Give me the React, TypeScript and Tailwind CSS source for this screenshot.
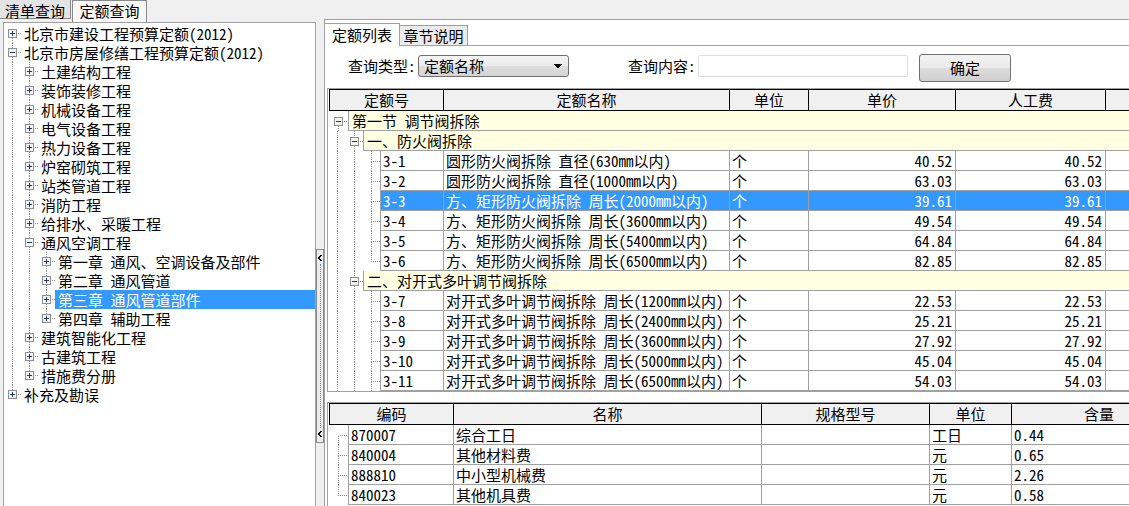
import React from "react";

const FONT = "font-['Noto_Sans_Mono_CJK_SC','Noto_Sans_CJK_SC',sans-serif]";

type GuideProps = {
  up?: boolean;
  down?: boolean;
  right?: boolean;
  box?: "plus" | "minus";
  w?: number;
  h: number;
};

function Guide({ up, down, right, box, w = 17, h }: GuideProps) {
  const n = Math.floor(w / 2);
  const m = Math.floor(h / 2);
  const cx = n + 0.5;
  const cy = m + 0.5;
  const dot = { stroke: "#8c8c8c", strokeWidth: 1, strokeDasharray: "1 1" };
  return (
    <svg width={w} height={h} className="block shrink-0" shapeRendering="crispEdges">
      {up && <line x1={cx} y1={0} x2={cx} y2={cy} {...dot} />}
      {down && <line x1={cx} y1={cy} x2={cx} y2={h} {...dot} />}
      {right && <line x1={cx + 1} y1={cy} x2={w} y2={cy} {...dot} />}
      {box && (
        <g>
          <rect x={n - 4 + 0.5} y={m - 4 + 0.5} width={8} height={8} fill="#f4f4f4" stroke="#8f8f8f" />
          <line x1={n - 2} y1={cy} x2={n + 3} y2={cy} stroke="#24386e" />
          {box === "plus" && <line x1={cx} y1={m - 2} x2={cx} y2={m + 3} stroke="#24386e" />}
        </g>
      )}
    </svg>
  );
}

type TreeItem = {
  t: string;
  g: boolean[];
  box: "plus" | "minus";
  up: boolean;
  down: boolean;
  sel?: boolean;
};

const lvl1a = ["土建结构工程", "装饰装修工程", "机械设备工程", "电气设备工程", "热力设备工程", "炉窑砌筑工程", "站类管道工程", "消防工程", "给排水、采暖工程"];

const tree: TreeItem[] = [
  { t: "北京市建设工程预算定额(2012)", g: [], box: "plus", up: false, down: true },
  { t: "北京市房屋修缮工程预算定额(2012)", g: [], box: "minus", up: true, down: true },
  ...lvl1a.map((t) => ({ t, g: [true], box: "plus" as const, up: true, down: true })),
  { t: "通风空调工程", g: [true], box: "minus", up: true, down: true },
  { t: "第一章 通风、空调设备及部件", g: [true, true], box: "plus", up: true, down: true },
  { t: "第二章 通风管道", g: [true, true], box: "plus", up: true, down: true },
  { t: "第三章 通风管道部件", g: [true, true], box: "plus", up: true, down: true, sel: true },
  { t: "第四章 辅助工程", g: [true, true], box: "plus", up: true, down: false },
  { t: "建筑智能化工程", g: [true], box: "plus", up: true, down: true },
  { t: "古建筑工程", g: [true], box: "plus", up: true, down: true },
  { t: "措施费分册", g: [true], box: "plus", up: true, down: false },
  { t: "补充及勘误", g: [], box: "plus", up: true, down: false },
];

function LeftColumn() {
  return (
    <div className="w-[316px] shrink-0 flex flex-col">
      <div className="h-[22px] flex items-start">
        <div className="w-[71px] h-[19px] bg-[#e4e4e4] border-r border-b border-[#8a8a8a] pt-[3px] leading-[16px] text-center">
          清单查询
        </div>
        <div className="ml-[1px] w-[75px] h-[22px] bg-[#f7f7f7] border-l border-r border-t border-[#8a8a8a] pt-[2px] leading-[16px] text-center">
          定额查询
        </div>
      </div>
      <div className="flex-1 ml-[3px] border-l border-t border-r border-[#a0a0a0] bg-white pt-[1px]">
        {tree.map((r, i) => (
          <div key={i} className="flex h-[19px]">
            {r.g.map((v, j) => (
              <Guide key={j} h={19} up={v} down={v} />
            ))}
            <Guide h={19} up={r.up} down={r.down} right box={r.box} />
            <div
              className={`flex-1 pl-[3px] leading-[19px] whitespace-pre ${
                r.sel ? "bg-[#3399ff] text-white" : ""
              }`}
            >
              {r.t}
            </div>
          </div>
        ))}
      </div>
    </div>
  );
}

function Chevron() {
  return (
    <svg width="6" height="8" className="block" shapeRendering="crispEdges">
      <path d="M4 1 L2 4 L4 7" stroke="#000" strokeWidth="1.6" fill="none" />
    </svg>
  );
}

function Splitter() {
  return (
    <div className="w-[8px] shrink-0 flex flex-col">
      <div className="mt-[249px] h-[194px] w-[8px] border border-[#8a8a8a] bg-[#ececec] flex flex-col items-center py-[4px]">
        <Chevron />
        <div className="flex-1 my-[2px] border-l border-dotted border-[#5a86d0]" />
        <Chevron />
      </div>
    </div>
  );
}

type GridRow =
  | { kind: "group"; gut: GuideProps[]; text: string }
  | { kind: "data"; gut: GuideProps[]; c: string[]; sel?: boolean };

const G0: GuideProps = { up: true, down: true, h: 20 };

const dataRow = (c: string[], last = false, sel = false): GridRow => ({
  kind: "data",
  gut: [G0, G0, { up: true, down: !last, right: true, h: 20 }],
  c,
  sel,
});

const upperRows: GridRow[] = [
  { kind: "group", gut: [{ box: "minus", down: true, right: true, h: 20, w: 19 }], text: "第一节 调节阀拆除" },
  { kind: "group", gut: [G0, { box: "minus", up: true, down: true, right: true, h: 20 }], text: "一、防火阀拆除" },
  dataRow(["3-1", "圆形防火阀拆除 直径(630mm以内)", "个", "40.52", "40.52"]),
  dataRow(["3-2", "圆形防火阀拆除 直径(1000mm以内)", "个", "63.03", "63.03"]),
  dataRow(["3-3", "方、矩形防火阀拆除 周长(2000mm以内)", "个", "39.61", "39.61"], false, true),
  dataRow(["3-4", "方、矩形防火阀拆除 周长(3600mm以内)", "个", "49.54", "49.54"]),
  dataRow(["3-5", "方、矩形防火阀拆除 周长(5400mm以内)", "个", "64.84", "64.84"]),
  dataRow(["3-6", "方、矩形防火阀拆除 周长(6500mm以内)", "个", "82.85", "82.85"], true),
  { kind: "group", gut: [G0, { box: "minus", up: true, down: true, right: true, h: 20 }], text: "二、对开式多叶调节阀拆除" },
  dataRow(["3-7", "对开式多叶调节阀拆除 周长(1200mm以内)", "个", "22.53", "22.53"]),
  dataRow(["3-8", "对开式多叶调节阀拆除 周长(2400mm以内)", "个", "25.21", "25.21"]),
  dataRow(["3-9", "对开式多叶调节阀拆除 周长(3600mm以内)", "个", "27.92", "27.92"]),
  dataRow(["3-10", "对开式多叶调节阀拆除 周长(5000mm以内)", "个", "45.04", "45.04"]),
  dataRow(["3-11", "对开式多叶调节阀拆除 周长(6500mm以内)", "个", "54.03", "54.03"]),
];

const lowerRows = [
  ["870007", "综合工日", "", "工日", "0.44"],
  ["840004", "其他材料费", "", "元", "0.65"],
  ["888810", "中小型机械费", "", "元", "2.26"],
  ["840023", "其他机具费", "", "元", "0.58"],
];

function UpperGrid() {
  return (
    <div className="mt-[6px] ml-[2px] border-l border-t border-b border-[#a0a0a0] pl-[1px] overflow-hidden">
      <div className="flex h-[22px] border-l border-t border-b border-black bg-[#f0f0f0] leading-[20px]">
        <div className="w-[114px] shrink-0 border-r border-black text-center">定额号</div>
        <div className="w-[286px] shrink-0 border-r border-black text-center">定额名称</div>
        <div className="w-[79px] shrink-0 border-r border-black text-center">单位</div>
        <div className="w-[147px] shrink-0 border-r border-black text-center">单价</div>
        <div className="w-[150px] shrink-0 border-r border-black text-center">人工费</div>
        <div className="w-[100px] shrink-0" />
      </div>
      {upperRows.map((r, i) =>
        r.kind === "group" ? (
          <div key={i} className="flex h-[20px]">
            {r.gut.map((g, j) => (
              <Guide key={j} {...g} />
            ))}
            <div className="flex-1 bg-[#ffffe1] border-l border-b border-[#a0a0a0] pl-[3px] leading-[19px] whitespace-pre">
              {r.text}
            </div>
          </div>
        ) : (
          <div key={i} className="flex h-[20px]">
            {r.gut.map((g, j) => (
              <Guide key={j} {...g} />
            ))}
            <div
              className={`flex flex-1 border-l border-b border-[#a0a0a0] leading-[19px] whitespace-pre ${
                r.sel ? "bg-[#3399ff] text-white" : ""
              }`}
            >
              <div className="w-[63px] shrink-0 border-r border-[#a0a0a0] pl-[2px]">{r.c[0]}</div>
              <div className="w-[286px] shrink-0 border-r border-[#a0a0a0] pl-[2px]">{r.c[1]}</div>
              <div className="w-[79px] shrink-0 border-r border-[#a0a0a0] pl-[2px]">{r.c[2]}</div>
              <div className="w-[147px] shrink-0 border-r border-[#a0a0a0] pr-[3px] text-right">{r.c[3]}</div>
              <div className="w-[150px] shrink-0 border-r border-[#a0a0a0] pr-[3px] text-right">{r.c[4]}</div>
              <div className="w-[100px] shrink-0" />
            </div>
          </div>
        )
      )}
    </div>
  );
}

function LowerGrid() {
  return (
    <div className="mt-[10px] ml-[2px] flex-1 border-l border-t border-[#a0a0a0] pl-[1px] overflow-hidden">
      <div className="flex h-[22px] border-l border-t border-b border-black bg-[#f0f0f0] leading-[20px]">
        <div className="w-[124px] shrink-0 border-r border-black text-center">编码</div>
        <div className="w-[308px] shrink-0 border-r border-black text-center">名称</div>
        <div className="w-[168px] shrink-0 border-r border-black text-center">规格型号</div>
        <div className="w-[82px] shrink-0 border-r border-black text-center">单位</div>
        <div className="w-[174px] shrink-0 text-center">含量</div>
      </div>
      {lowerRows.map((r, i) => (
        <div key={i} className="flex h-[20px]">
          <Guide w={19} h={20} up={i > 0} down={i < lowerRows.length - 1} right />
          <div className="flex flex-1 border-l border-b border-[#a0a0a0] leading-[19px] whitespace-pre">
            <div className="w-[105px] shrink-0 border-r border-[#a0a0a0] pl-[2px]">{r[0]}</div>
            <div className="w-[308px] shrink-0 border-r border-[#a0a0a0] pl-[2px]">{r[1]}</div>
            <div className="w-[168px] shrink-0 border-r border-[#a0a0a0] pl-[2px]">{r[2]}</div>
            <div className="w-[82px] shrink-0 border-r border-[#a0a0a0] pl-[2px]">{r[3]}</div>
            <div className="w-[174px] shrink-0 pl-[2px]">{r[4]}</div>
          </div>
        </div>
      ))}
    </div>
  );
}

function RightColumn() {
  return (
    <div className="w-[805px] shrink-0 pt-[19px] flex flex-col">
      <div className="flex-1 border-l border-t border-[#a0a0a0] bg-white flex flex-col">
        <div className="flex items-end h-[26px]">
          <div className="w-[75px] h-[23px] shrink-0 border-t border-r border-[#a0a0a0] bg-white text-center leading-[21px]">
            定额列表
          </div>
          <div className="w-[68px] h-[21px] shrink-0 border-t border-r border-b border-[#a0a0a0] bg-[#ebebeb] text-center leading-[19px]">
            章节说明
          </div>
          <div className="flex-1 h-[26px] border-b border-[#a0a0a0]" />
        </div>
        <div className="flex items-start mt-[8px] pl-[23px] h-[28px]">
          <span className="w-[70px] shrink-0 mt-[1px] leading-[22px]">查询类型:</span>
          <div className="mt-[1px] w-[151px] h-[22px] shrink-0 border border-[#707070] rounded-[3px] bg-[linear-gradient(to_bottom,#f4f4f4_0%,#ebebeb_50%,#dedede_50%,#d4d4d4_100%)] flex items-center justify-between pl-[5px] pr-[6px]">
            <span className="leading-[20px]">定额名称</span>
            <svg width="8" height="5" className="block" shapeRendering="crispEdges">
              <polygon points="0,0 8,0 4,5" fill="#000" />
            </svg>
          </div>
          <span className="ml-[59px] w-[70px] shrink-0 mt-[1px] leading-[22px]">查询内容:</span>
          <div className="mt-[1px] w-[210px] h-[22px] shrink-0 border border-[#dedede] rounded-[2px] bg-white" />
          <button className="ml-[11px] w-[92px] h-[28px] shrink-0 border border-[#707070] rounded-[3px] bg-[linear-gradient(to_bottom,#f2f2f2_0%,#ebebeb_50%,#dddddd_50%,#cfcfcf_100%)] leading-[26px] text-center">
            确定
          </button>
        </div>
        <UpperGrid />
        <LowerGrid />
      </div>
    </div>
  );
}

export default function App() {
  return (
    <div className={`${FONT} w-[1129px] h-[506px] overflow-hidden bg-[#f0f0f0] text-[15px] text-black flex`}>
      <LeftColumn />
      <Splitter />
      <RightColumn />
    </div>
  );
}
